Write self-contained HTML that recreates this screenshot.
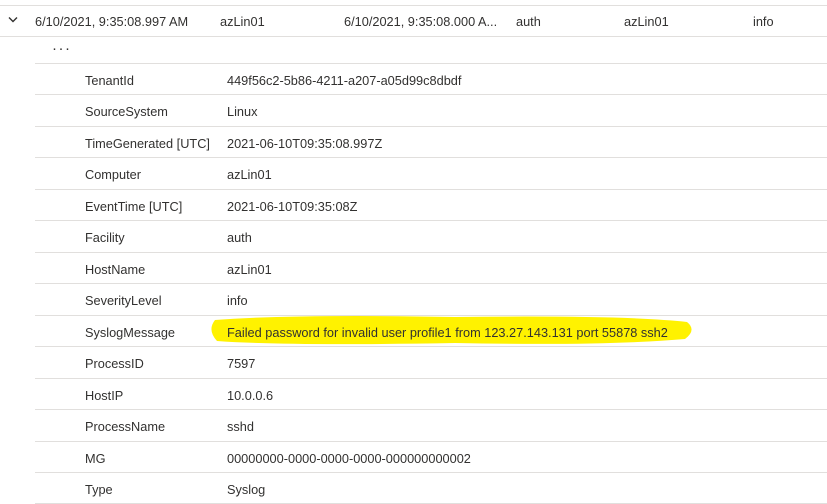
<!DOCTYPE html>
<html><head><meta charset="utf-8"><style>
*{margin:0;padding:0;box-sizing:border-box}
body{width:827px;height:504px;background:#fff;font-family:"Liberation Sans",sans-serif;font-size:12.75px;color:#323130;position:relative;overflow:hidden}
.a{position:absolute;white-space:nowrap}
.l{position:absolute;height:1px;background:#e1dfdd;right:0}
</style></head><body>
<div class="l" style="left:0;top:5px"></div>
<div class="l" style="left:0;top:36px"></div>
<svg class="a" style="left:8px;top:16px" width="10" height="8"><path d="M1 1.5 L5 5.5 L9 1.5" stroke="#323130" stroke-width="1.4" fill="none"/></svg>
<div class="a" style="left:35px;top:14px">6/10/2021, 9:35:08.997 AM</div>
<div class="a" style="left:220px;top:14px">azLin01</div>
<div class="a" style="left:344px;top:14px">6/10/2021, 9:35:08.000 A...</div>
<div class="a" style="left:516px;top:14px">auth</div>
<div class="a" style="left:624px;top:14px">azLin01</div>
<div class="a" style="left:753px;top:14px">info</div>
<div class="a" style="left:52px;top:40px;font-size:15px;letter-spacing:1.5px">···</div>
<svg class="a" style="left:205px;top:312px" width="495" height="36"><path d="M10 8 Q90 2 250 5 Q420 3 482 10 Q492 18 480 27 Q400 34 250 31 Q80 34 12 29 Q2 18 10 8Z" fill="#fff200"/></svg>
<div id="rows"></div>
<script>
var r=[["TenantId","449f56c2-5b86-4211-a207-a05d99c8dbdf"],["SourceSystem","Linux"],["TimeGenerated [UTC]","2021-06-10T09:35:08.997Z"],["Computer","azLin01"],["EventTime [UTC]","2021-06-10T09:35:08Z"],["Facility","auth"],["HostName","azLin01"],["SeverityLevel","info"],["SyslogMessage","Failed password for invalid user profile1 from 123.27.143.131 port 55878 ssh2"],["ProcessID","7597"],["HostIP","10.0.0.6"],["ProcessName","sshd"],["MG","00000000-0000-0000-0000-000000000002"],["Type","Syslog"]];
var h="";
for(var i=0;i<r.length;i++){var c=79+i*31.5;
h+='<div class="l" style="left:35px;top:'+Math.round(c-16.5)+'px"></div>';
h+='<div class="a" style="left:85px;top:'+(c-6.5)+'px">'+r[i][0]+'</div>';
h+='<div class="a" style="left:227px;top:'+(c-6.5)+'px">'+r[i][1]+'</div>';}
h+='<div class="l" style="left:35px;top:503px"></div>';
document.getElementById("rows").innerHTML=h;
</script>
</body></html>
